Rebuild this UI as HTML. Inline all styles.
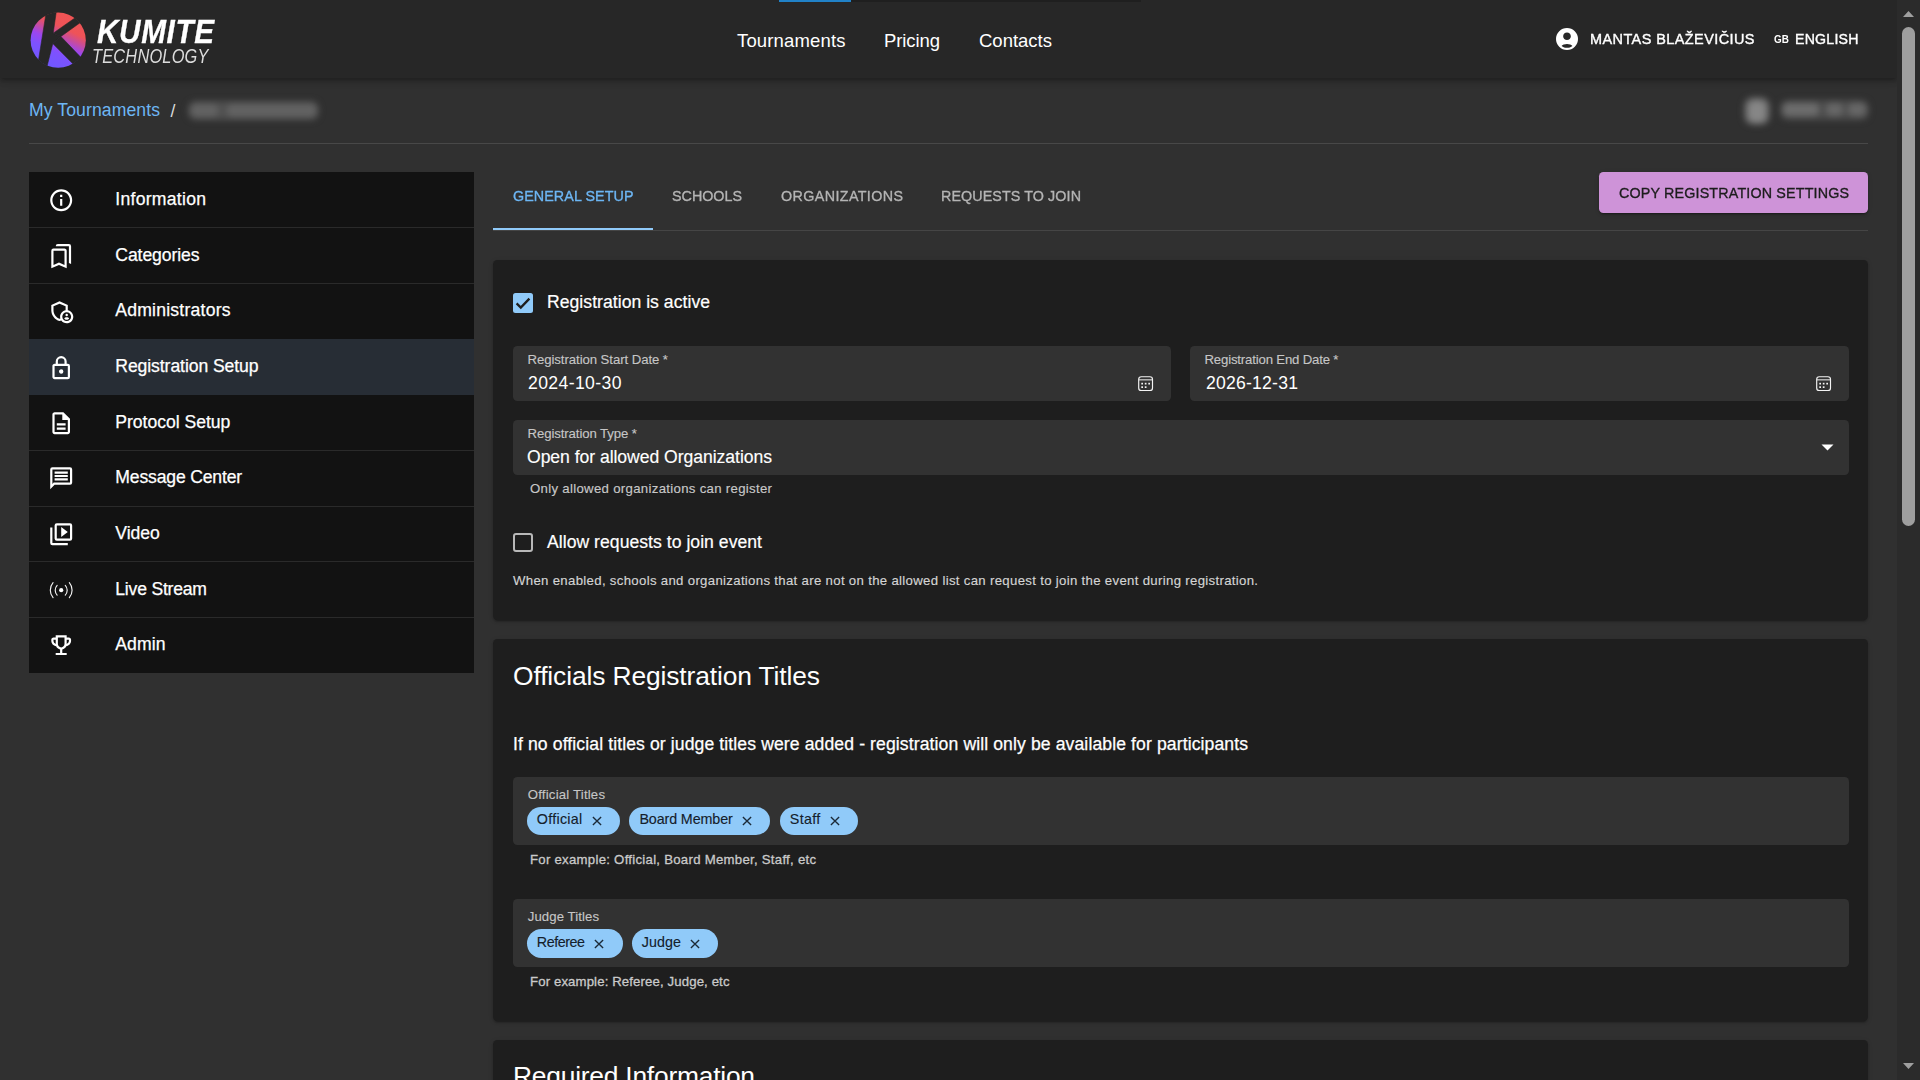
<!DOCTYPE html>
<html lang="en"><head><meta charset="utf-8"><title>Kumite Technology - Registration Setup</title>
<style>
html,body{margin:0;padding:0}
body{width:1920px;height:1080px;overflow:hidden;background:#303030;position:relative;font-family:"Liberation Sans",sans-serif;color:#fff}
.a{position:absolute}
#txt span{position:absolute;white-space:pre;line-height:1;font-family:"Liberation Sans",sans-serif;color:#fff}
#hdr{left:0;top:0;width:1897px;height:78px;background:#272727;box-shadow:0 2px 4px -1px rgba(0,0,0,.2),0 4px 5px 0 rgba(0,0,0,.14),0 1px 10px 0 rgba(0,0,0,.12)}
#sb{left:1897px;top:0;width:23px;height:1080px;background:#2b2b2b}
#thumb{left:1902px;top:27px;width:13px;height:499px;border-radius:6.5px;background:#9f9f9f}
.card{background:#1e1e1e;border-radius:4.4px;box-shadow:0 3px 1px -2px rgba(0,0,0,.2),0 2px 2px 0 rgba(0,0,0,.14),0 1px 5px 0 rgba(0,0,0,.12)}
.fld{background:#323232;border-radius:4.4px}
.chip{background:#90caf9;border-radius:15px;height:28px}
.li{left:29px;width:445px;background:#121212}
.dv{left:29px;width:445px;height:1px;background:#2a2a2a}
svg{position:absolute;overflow:visible}
.blur{filter:blur(3.5px)}

</style></head>
<body>
<div id="hdr" class="a"></div>
<div class="a" style="left:851px;top:0;width:290px;height:2px;background:#1f1f1f"></div>
<div class="a" style="left:779px;top:0;width:72px;height:2px;background:#2182c8"></div>
<!-- logo -->
<svg style="left:0;top:0" width="100" height="78" viewBox="0 0 100 78">
<defs><linearGradient id="lg" gradientUnits="userSpaceOnUse" x1="70.5" y1="15.0" x2="45.9" y2="65.4">
<stop offset="0" stop-color="#f05454"/><stop offset="0.26" stop-color="#ee5358"/><stop offset="0.40" stop-color="#c84c9c"/><stop offset="0.55" stop-color="#9c46f0"/><stop offset="0.73" stop-color="#7d52ff"/><stop offset="1" stop-color="#7058ff"/></linearGradient>
<clipPath id="lc"><circle cx="58.2" cy="40.2" r="27.9"/></clipPath></defs>
<circle cx="58.2" cy="40.2" r="27.6" fill="url(#lg)"/>
<g clip-path="url(#lc)"><g fill="#272727" stroke="#272727" stroke-width="0.6">
<path d="M46.9 8 L56.8 8 L53.2 33.2 L60.9 36.5 L52.8 43.6 L45.6 72 L36.6 72 Z"/>
<path d="M53.2 33.2 L87.2 9.4 L91.4 14.6 L60.9 36.5 Z"/>
<path d="M60.9 36.5 L88.4 65.3 L81.2 72.1 L52.8 43.6 Z"/>
</g></g>
</svg>
<!-- user icon -->
<svg style="left:1556px;top:28px" width="22" height="22" viewBox="2 2 20 20"><path fill="#fff" d="M12,2A10,10 0 0,0 2,12A10,10 0 0,0 12,22A10,10 0 0,0 22,12A10,10 0 0,0 12,2M7.07,18.28C7.5,17.38 10.12,16.5 12,16.5C13.88,16.5 16.5,17.38 16.93,18.28C15.57,19.36 13.86,20 12,20C10.14,20 8.43,19.36 7.07,18.28M12,6C13.94,6 15.5,7.56 15.5,9.5C15.5,11.44 13.94,13 12,13C10.06,13 8.5,11.44 8.5,9.5C8.5,7.56 10.06,6 12,6Z"/></svg>
<!-- scrollbar -->
<div id="sb" class="a"></div>
<div id="thumb" class="a"></div>
<svg style="left:1897px;top:0" width="23" height="1080"><path fill="#9f9f9f" d="M6 17 L17 17 L11.5 11 Z M6 1063 L17 1063 L11.5 1069 Z"/></svg>
<!-- breadcrumb divider -->
<div class="a" style="left:29px;top:143px;width:1839px;height:1px;background:#484848"></div>
<!-- blurred items -->
<div class="a" style="left:169px;top:87px;width:170px;height:48px;filter:blur(3.2px)">
<div class="a" style="left:19px;top:14px;width:131px;height:19px;background:#505050;border-radius:8px"></div>
<div class="a" style="left:22px;top:17px;width:27px;height:13px;background:#626262;border-radius:5px"></div>
<div class="a" style="left:58px;top:17px;width:89px;height:13px;background:#626262;border-radius:5px"></div>
</div>
<div class="a" style="left:1725px;top:80px;width:165px;height:62px;filter:blur(3.4px)">
<div class="a" style="left:19px;top:17px;width:26px;height:28px;background:#626262;border-radius:9px"></div>
<div class="a" style="left:23px;top:21px;width:18px;height:21px;background:#868686;border-radius:6px"></div>
<div class="a" style="left:55px;top:20px;width:89px;height:20px;background:#4c4c4c;border-radius:8px"></div>
<div class="a" style="left:58px;top:23px;width:36px;height:13px;background:#6c6c6c;border-radius:5px"></div>
<div class="a" style="left:101px;top:23px;width:17px;height:13px;background:#666;border-radius:5px"></div>
<div class="a" style="left:123px;top:23px;width:18px;height:13px;background:#666;border-radius:5px"></div>
</div>
<!-- sidebar -->
<div class="a li" style="top:172px;height:501px"></div>
<div class="a li" style="top:339px;height:56px;background:#272d35"></div>
<div class="a dv" style="top:227px"></div>
<div class="a dv" style="top:283px"></div>
<div class="a dv" style="top:450px"></div>
<div class="a dv" style="top:506px"></div>
<div class="a dv" style="top:561px"></div>
<div class="a dv" style="top:617px"></div>
<svg style="left:47.80px;top:186.50px" width="26.4" height="26.4" viewBox="0 0 24 24"><path fill="#fff" fill-rule="evenodd" d="M11,9H13V7H11M12,20C7.59,20 4,16.41 4,12C4,7.59 7.59,4 12,4C16.41,4 20,7.59 20,12C20,16.41 16.41,20 12,20M12,2A10,10 0 0,0 2,12A10,10 0 0,0 12,22A10,10 0 0,0 22,12A10,10 0 0,0 12,2M11,17H13V11H11V17Z"/></svg>
<svg style="left:47.80px;top:242.65px" width="26.4" height="26.4" viewBox="0 0 24 24"><path fill="#fff" fill-rule="evenodd" d="M9,1H19A2,2 0 0,1 21,3V19L19,18.13V3H7A2,2 0 0,1 9,1M15,20V7H5V20L10,17.82L15,20M15,5C16.11,5 17,5.9 17,7V23L10,20L3,23V7A2,2 0 0,1 5,5H15Z"/></svg>
<svg style="left:47.80px;top:297.80px" width="26.4" height="26.4" viewBox="0 0 24 24"><path fill="#fff" fill-rule="evenodd" d="M17,14.38A1.12,1.12 0 1,0 17,16.62A1.12,1.12 0 1,0 17,14.38Z M17,17.5c-0.73,0-2.19,0.36-2.24,1.08c0.5,0.71,1.32,1.17,2.24,1.17 s1.74-0.46,2.24-1.17C19.19,17.86,17.73,17.5,17,17.5z M18,11.09V6.27L10.5,3L3,6.27v4.91c0,4.54,3.2,8.79,7.5,9.82 c0.55-0.13,1.08-0.32,1.6-0.55C13.18,21.99,14.97,23,17,23c3.31,0,6-2.69,6-6C23,14.03,20.84,11.57,18,11.09z M11,17 c0,0.56,0.08,1.11,0.23,1.62c-0.24,0.11-0.48,0.22-0.73,0.3c-3.17-1-5.5-4.24-5.5-7.74v-3.6l5.5-2.4l5.5,2.4v3.51 C13.19,11.57,11,14.03,11,17z M17,21c-2.21,0-4-1.79-4-4c0-2.21,1.79-4,4-4s4,1.79,4,4C21,19.21,19.21,21,17,21z"/></svg>
<svg style="left:47.80px;top:354.75px" width="26.4" height="26.4" viewBox="0 0 24 24"><path fill="#fff" fill-rule="evenodd" d="M12,17C10.89,17 10,16.1 10,15C10,13.89 10.89,13 12,13A2,2 0 0,1 14,15A2,2 0 0,1 12,17M18,20V10H6V20H18M18,8A2,2 0 0,1 20,10V20A2,2 0 0,1 18,22H6C4.89,22 4,21.1 4,20V10C4,8.89 4.89,8 6,8H7V6A5,5 0 0,1 12,1A5,5 0 0,1 17,6V8H18M12,3A3,3 0 0,0 9,6V8H15V6A3,3 0 0,0 12,3Z"/></svg>
<svg style="left:47.80px;top:410.30px" width="26.4" height="26.4" viewBox="0 0 24 24"><path fill="#fff" fill-rule="evenodd" d="M8 16h8v2H8zm0-4h8v2H8zm6-10H6c-1.1 0-2 .9-2 2v16c0 1.1.89 2 1.99 2H18c1.1 0 2-.9 2-2V8l-6-6zm4 18H6V4h7v5h5v11z"/></svg>
<svg style="left:47.80px;top:464.75px" width="26.4" height="26.4" viewBox="0 0 24 24"><path fill="#fff" fill-rule="evenodd" d="M20,2H4A2,2 0 0,0 2,4V22L6,18H20A2,2 0 0,0 22,16V4A2,2 0 0,0 20,2M20,16H5.17L4,17.17V4H20V16M6,12H18V14H6V12M6,9H18V11H6V9M6,6H18V8H6V6Z"/></svg>
<svg style="left:47.80px;top:521.10px" width="26.4" height="26.4" viewBox="0 0 24 24"><path fill="#fff" fill-rule="evenodd" d="M4,6H2V20A2,2 0 0,0 4,22H18V20H4V6M20,2H8A2,2 0 0,0 6,4V16A2,2 0 0,0 8,18H20A2,2 0 0,0 22,16V4A2,2 0 0,0 20,2M20,16H8V4H20V16M12,5.5V14.5L18,10L12,5.5Z"/></svg>
<svg style="left:47.80px;top:576.85px" width="26.4" height="26.4" viewBox="0 0 24 24"><g fill="none" stroke="#f2f2f2" stroke-width="1.05" stroke-linecap="round"><path d="M4.6 5.2 A 10.5 10.5 0 0 0 4.6 18.8"/><path d="M19.4 5.2 A 10.5 10.5 0 0 1 19.4 18.8"/><path d="M8.3 7.6 A 6.4 6.4 0 0 0 8.3 16.4"/><path d="M15.7 7.6 A 6.4 6.4 0 0 1 15.7 16.4"/></g><circle cx="12" cy="12" r="1.9" fill="#fff"/></svg>
<svg style="left:47.80px;top:631.70px" width="26.4" height="26.4" viewBox="0 0 24 24"><path fill="#fff" fill-rule="evenodd" d="M19,5h-2V3H7v2H5C3.9,5,3,5.9,3,7v1c0,2.55,1.92,4.63,4.39,4.94c0.63,1.5,1.98,2.63,3.61,2.96V19H7v2h10v-2h-4v-3.1 c1.63-0.33,2.98-1.46,3.61-2.96C19.08,12.63,21,10.55,21,8V7C21,5.9,20.1,5,19,5z M5,8V7h2v3.82C5.84,10.4,5,9.3,5,8z M12,14 c-1.65,0-3-1.35-3-3V5h6v6C15,12.65,13.65,14,12,14z M19,8c0,1.3-0.84,2.4-2,2.82V7h2V8z"/></svg>
<!-- tabs -->
<div class="a" style="left:493px;top:230px;width:1375px;height:1px;background:#454545"></div>
<div class="a" style="left:493px;top:228px;width:160px;height:2.2px;background:#90caf9"></div>
<div class="a" style="left:1599px;top:172px;width:269px;height:41px;background:#ce93d8;border-radius:4.4px;box-shadow:0 3px 1px -2px rgba(0,0,0,.2),0 2px 2px 0 rgba(0,0,0,.14),0 1px 5px 0 rgba(0,0,0,.12)"></div>
<!-- card 1 -->
<div class="a card" style="left:493px;top:260px;width:1375px;height:360px"></div>
<div class="a" style="left:513px;top:293px;width:20px;height:20px;background:#90caf9;border-radius:2.5px"></div>
<svg style="left:513px;top:293px" width="20" height="20" viewBox="0 0 20 20"><path d="M3.6 10.4 L7.8 14.6 L16.4 5.6" stroke="#1e1e1e" stroke-width="2.3" fill="none"/></svg>
<div class="a fld" style="left:513px;top:346px;width:658px;height:55px"></div>
<div class="a fld" style="left:1190px;top:346px;width:659px;height:55px"></div>
<div class="a fld" style="left:513px;top:420px;width:1336px;height:55px"></div>
<svg style="left:1821px;top:443.5px" width="13" height="7"><path d="M0.5 0.5 L12.5 0.5 L6.5 6.5 Z" fill="#fff"/></svg>
<div class="a" style="left:513px;top:533px;width:15.6px;height:15.2px;border:2.2px solid #b8b8b8;border-radius:3px"></div>
<!-- card 2 -->
<div class="a card" style="left:493px;top:639px;width:1375px;height:382px"></div>
<div class="a fld" style="left:513px;top:777px;width:1336px;height:68px"></div>
<div class="a fld" style="left:513px;top:899px;width:1336px;height:68px"></div>
<div class="a chip" style="left:527px;top:807px;width:93.20px;height:28px;border-radius:14.0px"></div><svg style="left:590.70px;top:814.60px" width="12" height="12" viewBox="-6 -6 12 12"><path d="M-4.1 -4.1 L4.1 4.1 M4.1 -4.1 L-4.1 4.1" stroke="#1b2a38" stroke-width="1.35" fill="none"/></svg>
<div class="a chip" style="left:628.7px;top:807px;width:141.50px;height:28px;border-radius:14.0px"></div><svg style="left:740.60px;top:814.60px" width="12" height="12" viewBox="-6 -6 12 12"><path d="M-4.1 -4.1 L4.1 4.1 M4.1 -4.1 L-4.1 4.1" stroke="#1b2a38" stroke-width="1.35" fill="none"/></svg>
<div class="a chip" style="left:779.6px;top:807px;width:78.80px;height:28px;border-radius:14.0px"></div><svg style="left:828.60px;top:814.60px" width="12" height="12" viewBox="-6 -6 12 12"><path d="M-4.1 -4.1 L4.1 4.1 M4.1 -4.1 L-4.1 4.1" stroke="#1b2a38" stroke-width="1.35" fill="none"/></svg>
<div class="a chip" style="left:527px;top:929px;width:96.00px;height:29px;border-radius:14.5px"></div><svg style="left:592.50px;top:937.60px" width="12" height="12" viewBox="-6 -6 12 12"><path d="M-4.1 -4.1 L4.1 4.1 M4.1 -4.1 L-4.1 4.1" stroke="#1b2a38" stroke-width="1.35" fill="none"/></svg>
<div class="a chip" style="left:631.9px;top:929px;width:86.10px;height:29px;border-radius:14.5px"></div><svg style="left:688.70px;top:937.60px" width="12" height="12" viewBox="-6 -6 12 12"><path d="M-4.1 -4.1 L4.1 4.1 M4.1 -4.1 L-4.1 4.1" stroke="#1b2a38" stroke-width="1.35" fill="none"/></svg>
<svg style="left:1138px;top:376px" width="16" height="16" viewBox="0 0 16 16"><rect x="0.7" y="0.7" width="13.8" height="13.8" rx="2.6" fill="none" stroke="#f4f4f4" stroke-width="1.15"/><rect x="1" y="3.3" width="13.4" height="1.1" fill="#e4e4e4"/><g fill="#f4f4f4"><rect x="3.3" y="6.8" width="1.7" height="1.7"/><rect x="6.8" y="6.8" width="1.7" height="1.7"/><rect x="10.3" y="6.8" width="1.7" height="1.7"/><rect x="3.3" y="10.3" width="1.7" height="1.7"/><rect x="6.8" y="10.3" width="1.7" height="1.7"/></g></svg>
<svg style="left:1816px;top:376px" width="16" height="16" viewBox="0 0 16 16"><rect x="0.7" y="0.7" width="13.8" height="13.8" rx="2.6" fill="none" stroke="#f4f4f4" stroke-width="1.15"/><rect x="1" y="3.3" width="13.4" height="1.1" fill="#e4e4e4"/><g fill="#f4f4f4"><rect x="3.3" y="6.8" width="1.7" height="1.7"/><rect x="6.8" y="6.8" width="1.7" height="1.7"/><rect x="10.3" y="6.8" width="1.7" height="1.7"/><rect x="3.3" y="10.3" width="1.7" height="1.7"/><rect x="6.8" y="10.3" width="1.7" height="1.7"/></g></svg>
<!-- card 3 -->
<div class="a card" style="left:493px;top:1040px;width:1375px;height:60px"></div>

<div id="txt">
<span style="left:97.00px;top:14.57px;font-size:33px;font-weight:700;font-style:italic;letter-spacing:0.700px;-webkit-text-stroke:0.3px;transform:scaleX(0.9);transform-origin:0 50%;">KUMITE</span>
<span style="left:92.00px;top:46.99px;font-size:19.5px;color:#dcdcdc;font-style:italic;letter-spacing:0.240px;transform:scaleX(0.84);transform-origin:0 50%;">TECHNOLOGY</span>
<span style="left:737.00px;top:32.34px;font-size:18.5px;letter-spacing:0.155px;">Tournaments</span>
<span style="left:884.00px;top:32.34px;font-size:18.5px;letter-spacing:-0.094px;">Pricing</span>
<span style="left:979.00px;top:32.34px;font-size:18.5px;">Contacts</span>
<span style="left:1589.50px;top:30.66px;font-size:15.4px;letter-spacing:0.450px;-webkit-text-stroke:0.4px;transform:scaleX(0.94);transform-origin:0 50%;">MANTAS BLAŽEVIČIUS</span>
<span style="left:1774.00px;top:34.39px;font-size:11px;font-weight:700;letter-spacing:0.167px;transform:scaleX(0.9);transform-origin:0 50%;">GB</span>
<span style="left:1794.50px;top:30.66px;font-size:15.4px;letter-spacing:0.241px;-webkit-text-stroke:0.4px;transform:scaleX(0.92);transform-origin:0 50%;">ENGLISH</span>
<span style="left:29.00px;top:102.30px;font-size:17.6px;color:#6db6f4;letter-spacing:0.097px;">My Tournaments</span>
<span style="left:170.50px;top:103.30px;font-size:17.6px;color:#dcdcdc;">/</span>
<span style="left:115.30px;top:191.20px;font-size:17.6px;letter-spacing:0.268px;-webkit-text-stroke:0.25px;">Information</span>
<span style="left:115.30px;top:246.85px;font-size:17.6px;letter-spacing:-0.099px;-webkit-text-stroke:0.25px;">Categories</span>
<span style="left:115.30px;top:301.60px;font-size:17.6px;letter-spacing:0.213px;-webkit-text-stroke:0.25px;">Administrators</span>
<span style="left:115.30px;top:358.15px;font-size:17.6px;letter-spacing:-0.091px;-webkit-text-stroke:0.25px;">Registration Setup</span>
<span style="left:115.30px;top:413.80px;font-size:17.6px;letter-spacing:-0.032px;-webkit-text-stroke:0.25px;">Protocol Setup</span>
<span style="left:115.30px;top:469.45px;font-size:17.6px;letter-spacing:-0.169px;-webkit-text-stroke:0.25px;">Message Center</span>
<span style="left:115.30px;top:525.10px;font-size:17.6px;letter-spacing:-0.072px;-webkit-text-stroke:0.25px;">Video</span>
<span style="left:115.30px;top:580.75px;font-size:17.6px;letter-spacing:-0.217px;-webkit-text-stroke:0.25px;">Live Stream</span>
<span style="left:115.30px;top:636.40px;font-size:17.6px;letter-spacing:0.081px;-webkit-text-stroke:0.25px;">Admin</span>
<span style="left:512.50px;top:187.96px;font-size:15.4px;color:#6db6f4;letter-spacing:0.083px;-webkit-text-stroke:0.35px;transform:scaleX(0.93);transform-origin:0 50%;">GENERAL SETUP</span>
<span style="left:672.00px;top:187.96px;font-size:15.4px;color:#b4b4b4;-webkit-text-stroke:0.35px;transform:scaleX(0.93);transform-origin:0 50%;">SCHOOLS</span>
<span style="left:781.00px;top:187.96px;font-size:15.4px;color:#b4b4b4;letter-spacing:0.410px;-webkit-text-stroke:0.35px;transform:scaleX(0.93);transform-origin:0 50%;">ORGANIZATIONS</span>
<span style="left:941.00px;top:187.96px;font-size:15.4px;color:#b4b4b4;letter-spacing:0.096px;-webkit-text-stroke:0.35px;transform:scaleX(0.93);transform-origin:0 50%;">REQUESTS TO JOIN</span>
<span style="left:1619.00px;top:185.46px;font-size:15.4px;color:#1d1d1d;letter-spacing:0.166px;-webkit-text-stroke:0.35px;transform:scaleX(0.93);transform-origin:0 50%;">COPY REGISTRATION SETTINGS</span>
<span style="left:547.00px;top:294.30px;font-size:17.6px;letter-spacing:0.032px;-webkit-text-stroke:0.2px;">Registration is active</span>
<span style="left:527.50px;top:352.83px;font-size:13.2px;color:#c6c6c6;letter-spacing:-0.071px;-webkit-text-stroke:0.12px;">Registration Start Date *</span>
<span style="left:528.00px;top:374.90px;font-size:17.6px;letter-spacing:0.389px;">2024-10-30</span>
<span style="left:1204.50px;top:352.83px;font-size:13.2px;color:#c6c6c6;letter-spacing:-0.173px;-webkit-text-stroke:0.12px;">Registration End Date *</span>
<span style="left:1206.00px;top:374.90px;font-size:17.6px;letter-spacing:0.222px;">2026-12-31</span>
<span style="left:527.50px;top:426.83px;font-size:13.2px;color:#c6c6c6;letter-spacing:-0.094px;-webkit-text-stroke:0.12px;">Registration Type *</span>
<span style="left:527.00px;top:448.60px;font-size:17.6px;letter-spacing:-0.050px;-webkit-text-stroke:0.15px;">Open for allowed Organizations</span>
<span style="left:530.00px;top:481.83px;font-size:13.2px;color:#c8c8c8;letter-spacing:0.311px;-webkit-text-stroke:0.15px;">Only allowed organizations can register</span>
<span style="left:547.00px;top:534.30px;font-size:17.6px;letter-spacing:0.030px;-webkit-text-stroke:0.2px;">Allow requests to join event</span>
<span style="left:513.00px;top:573.83px;font-size:13.2px;color:#d4d4d4;letter-spacing:0.320px;-webkit-text-stroke:0.15px;">When enabled, schools and organizations that are not on the allowed list can request to join the event during registration.</span>
<span style="left:513.00px;top:662.65px;font-size:26.4px;letter-spacing:-0.123px;">Officials Registration Titles</span>
<span style="left:513.00px;top:736.10px;font-size:17.6px;letter-spacing:0.105px;-webkit-text-stroke:0.25px;">If no official titles or judge titles were added - registration will only be available for participants</span>
<span style="left:527.80px;top:787.83px;font-size:13.2px;color:#c6c6c6;letter-spacing:0.192px;-webkit-text-stroke:0.12px;">Official Titles</span>
<span style="left:530.00px;top:852.83px;font-size:13.2px;color:#cacaca;letter-spacing:0.269px;-webkit-text-stroke:0.3px;">For example: Official, Board Member, Staff, etc</span>
<span style="left:527.80px;top:909.83px;font-size:13.2px;color:#c6c6c6;letter-spacing:0.075px;-webkit-text-stroke:0.12px;">Judge Titles</span>
<span style="left:530.00px;top:975.13px;font-size:13.2px;color:#cacaca;letter-spacing:0.122px;-webkit-text-stroke:0.3px;">For example: Referee, Judge, etc</span>
<span style="left:513.00px;top:1063.25px;font-size:26.4px;letter-spacing:-0.234px;">Required Information</span>
<span style="left:536.80px;top:811.70px;font-size:14.3px;color:#14202b;letter-spacing:0.280px;-webkit-text-stroke:0.12px;">Official</span>
<span style="left:639.40px;top:811.70px;font-size:14.3px;color:#14202b;letter-spacing:-0.110px;-webkit-text-stroke:0.12px;">Board Member</span>
<span style="left:789.75px;top:811.70px;font-size:14.3px;color:#14202b;letter-spacing:0.348px;-webkit-text-stroke:0.12px;">Staff</span>
<span style="left:536.80px;top:934.70px;font-size:14.3px;color:#14202b;letter-spacing:-0.446px;-webkit-text-stroke:0.12px;">Referee</span>
<span style="left:641.80px;top:934.70px;font-size:14.3px;color:#14202b;letter-spacing:0.058px;-webkit-text-stroke:0.12px;">Judge</span>
</div>
</body></html>
